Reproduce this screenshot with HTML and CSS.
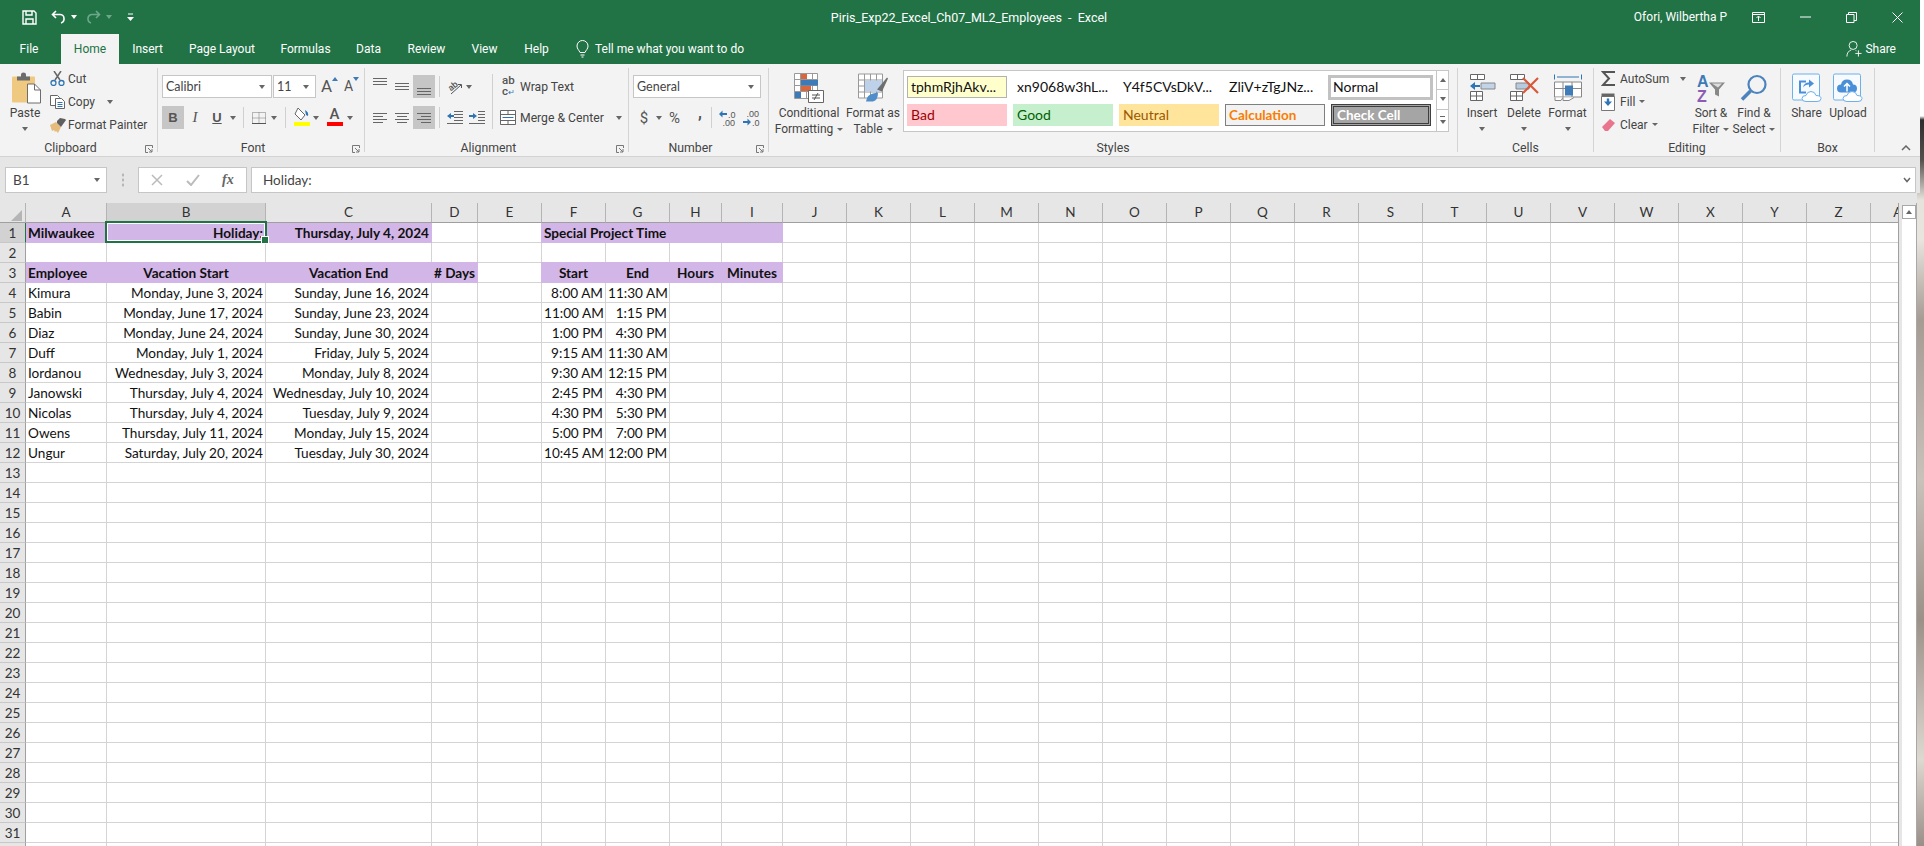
FILE: index.html
```html
<!DOCTYPE html>
<html lang="en">
<head>
<meta charset="utf-8">
<title>Piris_Exp22_Excel_Ch07_ML2_Employees - Excel</title>
<link rel="stylesheet" href="styles.css">
</head>
<body>
<div class="top">
  <header class="titlebar">
    <div class="qat">
      <svg class="q-save" width="15" height="15" viewBox="0 0 15 15" fill="none" stroke="#fff" stroke-width="1.4"><path d="M1 1h11l2 2v11H1z"/><path d="M4 1v4h6V1M4 14V9h7v5"/></svg>
      <svg class="q-undo" width="15" height="14" viewBox="0 0 15 14" fill="none" stroke="#fff" stroke-width="1.6"><path d="M5 1 1.5 4.5 5 8M2 4.5h7a4 4 0 0 1 4 4v1a4 4 0 0 1-3 3.5"/></svg>
      <i class="caret white q-c1"></i>
      <svg class="q-redo" width="15" height="14" viewBox="0 0 15 14" fill="none" stroke="#6ea88a" stroke-width="1.6"><path d="M10 1l3.5 3.5L10 8M13 4.5H6a4 4 0 0 0-4 4v1a4 4 0 0 0 3 3.5"/></svg>
      <i class="caret dim q-c2"></i>
      <svg class="q-more" width="7" height="8" viewBox="0 0 7 8"><path d="M1 1h5" stroke="#fff"/><path d="M0 4h7L3.500 8z" fill="#fff"/></svg>
    </div>
    <div class="doc-title">Piris_Exp22_Excel_Ch07_ML2_Employees  -  Excel</div>
    <div class="win">
      <span class="user">Ofori, Wilbertha P</span>
      <span class="win-btn"><svg width="14" height="11" viewBox="0 0 14 11" fill="none" stroke="#fff"><path d="M.5.500h12v10H.5zM.5 2.500h12M6.500 9V4.500M4.500 6l2-2 2 2"/></svg></span>
      <span class="win-btn"><svg width="11" height="2" viewBox="0 0 11 2"><path d="M0 1h11" stroke="#fff"/></svg></span>
      <span class="win-btn"><svg width="11" height="11" viewBox="0 0 11 11" fill="none" stroke="#fff"><path d="M.5 2.500h7.500v8H.5zM2.500 2.500v-2h8v8H8"/></svg></span>
      <span class="win-btn"><svg width="11" height="11" viewBox="0 0 11 11"><path d="M.5.500l10 10M10.500.500l-10 10" stroke="#fff"/></svg></span>
    </div>
  </header>
  <nav class="tabs">
    <span class="tab tab-file">File</span>
    <span class="tab tab-on">Home</span>
    <span class="tab">Insert</span>
    <span class="tab">Page Layout</span>
    <span class="tab">Formulas</span>
    <span class="tab">Data</span>
    <span class="tab">Review</span>
    <span class="tab">View</span>
    <span class="tab">Help</span>
    <span class="tell">
      <svg width="13" height="18" viewBox="0 0 13 18" fill="none" stroke="#fff"><path d="M4 12.500C3 10 1 9 1 6a5.500 5.500 0 0 1 11 0c0 3-2 4-3 6.500zM4.500 15h4M5.500 17h2"/></svg>
      <span>Tell me what you want to do</span>
    </span>
    <span class="share-top">
      <svg width="16" height="18" viewBox="0 0 18 19" fill="none" stroke="#fff"><circle cx="8" cy="5.500" r="4.500"/><path d="M1 18c0-4 2-6.500 5-7.500M11 11l1 1M14 11v7M10.500 14.500h7"/></svg>
      <span>Share</span>
    </span>
  </nav>

  <section class="ribbon">
    <div class="group g-clip">
      <div class="body">
        <div class="big b-paste">
          <svg class="paste-ic" width="30" height="31" viewBox="0 0 30 31"><rect y="4" width="23" height="26" rx="1" fill="#f0c981"/><path d="M5 8V4h4V2q0-2 2.500-2T14 2v2h4v4z" fill="#6d6d6d"/><path d="M15.500 11.500h7l6 6v13h-13z" fill="#fff" stroke="#6d6d6d"/><path d="M22.500 11.500v6h6" fill="none" stroke="#6d6d6d"/></svg>
          <span class="lbl">Paste</span>
          <i class="caret cap"></i>
        </div>
        <div class="smalls">
          <div class="small"><span class="ic"><svg width="15" height="15" viewBox="0 0 15 15" fill="none"><path d="M4 0l6 9M11 0 5 9" stroke="#666" stroke-width="1.500"/><circle cx="3.500" cy="12" r="2.500" stroke="#2f75b5" stroke-width="1.300"/><circle cx="11.500" cy="12" r="2.500" stroke="#2f75b5" stroke-width="1.300"/></svg></span>Cut</div>
          <div class="small"><span class="ic"><svg width="16" height="14" viewBox="0 0 16 14" fill="#fff" stroke="#666"><path d="M.5.500h7l2 2v8h-9z"/><path d="M5.500 3.500h6l3 3v7h-9z"/><path d="M7.500 7.500h5M7.500 9.500h5M7.500 11.500h5" stroke="#2f75b5"/></svg></span>Copy<i class="caret c-copy"></i></div>
          <div class="small"><span class="ic"><svg width="16" height="16" viewBox="0 0 16 16"><path d="M0 8l6-3 5 5-3 6-2-2-1 1-1-2-2 1z" fill="#e5bc7c"/><path d="M7 4l3-3 5 1 1 1-5 7-4-4z" fill="#5f5f5f"/></svg></span>Format Painter</div>
        </div>
      </div>
      <div class="label has-launcher">Clipboard<svg class="launch" width="8" height="8" viewBox="0 0 8 8" fill="none" stroke="#777"><path d="M7.500 3V.500H.500v7H3M3 3l4 4M4 7h3V4"/></svg></div>
    </div>

    <div class="group g-font">
      <div class="body stack">
        <div class="row1">
          <div class="combo c-font"><span>Calibri</span><i class="caret"></i></div>
          <div class="combo c-size"><span>11</span><i class="caret"></i></div>
          <span class="grow">A<i class="tri up"></i></span>
          <span class="grow shrink">A<i class="tri down"></i></span>
        </div>
        <div class="row2">
          <span class="btn on bold">B</span>
          <span class="btn ital">I</span>
          <span class="btn under">U</span>
          <i class="caret c-u"></i>
          <i class="vsep s-u"></i>
          <svg class="i-border" width="14" height="12" viewBox="0 0 14 12" fill="none" stroke="#777" stroke-dasharray="1 1"><path d="M.500.500h13v11H.500zM.500 6h13M7 .500v11"/><path d="M0 11.500h14" stroke="#555" stroke-dasharray="none"/></svg>
          <i class="caret c-b"></i>
          <i class="vsep s-b"></i>
          <span class="colored">
            <svg width="17" height="14" viewBox="0 0 17 14"><path d="M5 1l7 7-4 5-6-6z" fill="#fff" stroke="#666"/><path d="M12 3q4 2 3 6l-2-1z" fill="#2f75b5"/></svg>
            <i class="bar yellow"></i>
          </span>
          <i class="caret c-f"></i>
          <span class="colored fcolor"><span class="fa">A</span><i class="bar red"></i></span>
          <i class="caret c-a"></i>
        </div>
      </div>
      <div class="label has-launcher">Font<svg class="launch" width="8" height="8" viewBox="0 0 8 8" fill="none" stroke="#777"><path d="M7.500 3V.500H.500v7H3M3 3l4 4M4 7h3V4"/></svg></div>
    </div>

    <div class="group g-align">
      <div class="body">
        <div class="stack align-left">
          <div class="row1 al">
            <span class="btn"><svg width="14" height="8" viewBox="0 0 14 8" class="shift-up"><path d="M0 .500h14M0 3.500h14M0 6.500h14" stroke="#666"/></svg></span>
            <span class="btn"><svg width="14" height="8" viewBox="0 0 14 8"><path d="M0 .500h14M0 3.500h14M0 6.500h14" stroke="#666"/></svg></span>
            <span class="btn on"><svg width="14" height="8" viewBox="0 0 14 8" class="shift-down"><path d="M0 .500h14M0 3.500h14M0 6.500h14" stroke="#666"/></svg></span>
            <i class="vsep s-al"></i>
            <span class="btn"><svg width="18" height="16" viewBox="0 0 18 16" fill="none" stroke="#555"><text x="2" y="10" class="orient" transform="rotate(-40 7 7)">ab</text><path d="M5 15 15 6M12 5.500h3.500V9"/></svg></span>
            <i class="caret c-o"></i>
          </div>
          <div class="row2 al">
            <span class="btn"><svg width="14" height="10" viewBox="0 0 14 10"><path d="M0 .500h14M0 3.500h10M0 6.500h14M0 9.500h10" stroke="#666"/></svg></span>
            <span class="btn"><svg width="14" height="10" viewBox="0 0 14 10"><path d="M0 .500h14M2 3.500h10M0 6.500h14M2 9.500h10" stroke="#666"/></svg></span>
            <span class="btn on"><svg width="14" height="10" viewBox="0 0 14 10"><path d="M0 .500h14M4 3.500h10M0 6.500h14M4 9.500h10" stroke="#666"/></svg></span>
            <i class="vsep s-al"></i>
            <span class="btn"><svg width="16" height="13" viewBox="0 0 16 13"><path d="M7 .500h9M7 3.500h9M7 6.500h9M7 9.500h9M0 12.500h16" stroke="#666"/><path d="M0 5l4-3v2h3v2H4v2z" fill="#2f75b5"/></svg></span>
            <span class="btn"><svg width="16" height="13" viewBox="0 0 16 13"><path d="M9 .500h7M9 3.500h7M9 6.500h7M9 9.500h7M0 12.500h16" stroke="#666"/><path d="M8 5 4 2v2H0v2h4v2z" fill="#2f75b5"/></svg></span>
          </div>
        </div>
        <i class="vsep tall"></i>
        <div class="stack align-right">
          <div class="row1 wrap"><span class="wrap-ic"><span>ab</span><span>c<b>↵</b></span></span><span>Wrap Text</span></div>
          <div class="row2 merge"><svg width="16" height="15" viewBox="0 0 16 15" fill="#fff" stroke="#666"><path d="M.500.500h15v14H.500z"/><path d="M.500 4.500h15M.500 10.500h15M8 .500v4M8 10.500v4"/><path d="M2.500 7.500h11" stroke="#2f75b5"/></svg><span>Merge &amp; Center</span><i class="caret c-m"></i></div>
        </div>
      </div>
      <div class="label has-launcher">Alignment<svg class="launch" width="8" height="8" viewBox="0 0 8 8" fill="none" stroke="#777"><path d="M7.500 3V.500H.500v7H3M3 3l4 4M4 7h3V4"/></svg></div>
    </div>

    <div class="group g-num">
      <div class="body stack">
        <div class="row1"><div class="combo c-num"><span>General</span><i class="caret"></i></div></div>
        <div class="row2 nums">
          <span class="dollar">$</span><i class="caret c-d"></i>
          <span class="pct">%</span>
          <span class="comma">,</span>
          <i class="vsep s-n"></i>
          <svg width="17" height="16" viewBox="0 0 17 16"><path d="M0 4l3.500-3.500v2.500H8v2H3.500v2.500z" fill="#2f75b5"/><text x="9" y="8" class="tiny">.0</text><text x="3.500" y="15.500" class="tiny">.00</text></svg>
          <svg class="dec" width="17" height="16" viewBox="0 0 17 16"><text x="3.500" y="7" class="tiny">.00</text><path d="M8 12l-3.500-3.500V11H0v2h4.500v2.500z" fill="#2f75b5"/><text x="9" y="15.500" class="tiny">.0</text></svg>
        </div>
      </div>
      <div class="label has-launcher">Number<svg class="launch" width="8" height="8" viewBox="0 0 8 8" fill="none" stroke="#777"><path d="M7.500 3V.500H.500v7H3M3 3l4 4M4 7h3V4"/></svg></div>
    </div>

    <div class="group g-styles">
      <div class="body">
        <div class="big b-cf">
          <svg width="30" height="30" viewBox="0 0 30 30"><path d="M.500.500h23v25H.500zM.500 6.500h23M.500 12.500h23M.500 18.500h23M6.500.500v25M12.500.500v25M18.500.500v25" fill="#fff" stroke="#999"/><path d="M7 1h6v5H7zM7 13h10v5H7z" fill="#d9663c"/><path d="M7 7h17v5.500H7zM1 19h6v6H1z" fill="#3c7ab8"/><path d="M14.500 17.500h15v12h-15z" fill="#fff" stroke="#666"/><path d="M18 22h8M18 25h8M24 20l-4 7" stroke="#555" fill="none"/></svg>
          <span class="lbl">Conditional</span>
          <span class="lbl">Formatting<i class="caret in"></i></span>
        </div>
        <div class="big b-ft">
          <svg width="31" height="29" viewBox="0 0 31 29"><path d="M.500.500h24v24H.500zM.500 6.500h24M.500 12.500h24M.500 18.500h24M6.500.500v24M12.500.500v24M18.500.500v24" fill="#fff" stroke="#999"/><path d="M7 7h17v11H7z" fill="#bdd2ea"/><path d="M19 16 29 4l1 1-6 13z" fill="#6e6e6e"/><path d="M8 28q1-7 7-8l5-1q0 8-5 9z" fill="#4f8ecb"/></svg>
          <span class="lbl">Format as</span>
          <span class="lbl">Table<i class="caret in"></i></span>
        </div>
        <div class="gallery">
          <div class="st-grid">
            <span class="st st-y">tphmRjhAkv...</span>
            <span class="st">xn9068w3hL...</span>
            <span class="st">Y4f5CVsDkV...</span>
            <span class="st">ZliV+zTgJNz...</span>
            <span class="st st-normal">Normal</span>
            <span class="st st-bad">Bad</span>
            <span class="st st-good">Good</span>
            <span class="st st-neu">Neutral</span>
            <span class="st st-calc">Calculation</span>
            <span class="st st-check">Check Cell</span>
          </div>
          <div class="st-scroll">
            <span><i class="tri up gray"></i></span>
            <span><i class="tri down gray"></i></span>
            <span class="more"><i class="tri down gray"></i></span>
          </div>
        </div>
      </div>
      <div class="label">Styles</div>
    </div>

    <div class="group g-cells">
      <div class="body">
        <div class="big b-c1">
          <svg width="27" height="28" viewBox="0 0 27 28"><path d="M1.500.500h14v5h-14zM8.500.500v5M1.500 17.500h12v9h-12zM1.500 22h12M7.500 17.500v9" fill="#fff" stroke="#666"/><path d="M12 9h14v6H12z" fill="#c2d4e8" stroke="#888"/><path d="M1 12l5-4v3h5v2H6v3z" fill="#2f75b5"/></svg>
          <span class="lbl">Insert</span><i class="caret cap"></i>
        </div>
        <div class="big b-c2">
          <svg width="31" height="28" viewBox="0 0 31 28"><path d="M1.500.500h14v5h-14zM8.500.500v5M1.500 17.500h12v9h-12zM1.500 22h12M7.500 17.500v9" fill="#fff" stroke="#666"/><path d="M7 9h13v6H7z" fill="#b6cbe2" stroke="#888"/><path d="M14 4l15 15M29 4 14 19" stroke="#d9583a" stroke-width="2.200"/></svg>
          <span class="lbl">Delete</span><i class="caret cap"></i>
        </div>
        <div class="big b-c3">
          <svg width="28" height="29" viewBox="0 0 28 29"><path d="M.500 1v5M27.500 1v5M3 3.500h22" stroke="#2f75b5" fill="none"/><path d="M.500 8.500h27v15h-27zM.500 15h27M9 8.500v15M18 8.500v15" fill="#fff" stroke="#888"/><path d="M11 12h8v10h-8z" fill="#3f7cb8"/><path d="M1 24v3h6l2-3M9 24v3h6l5-3" fill="#fff" stroke="#888"/></svg>
          <span class="lbl">Format</span><i class="caret cap"></i>
        </div>
      </div>
      <div class="label">Cells</div>
    </div>

    <div class="group g-edit">
      <div class="body">
        <div class="smalls s-edit">
          <div class="small"><span class="ic"><svg width="15" height="15" viewBox="0 0 15 15"><path d="M14 1H2l6 6.500L2 14h12" fill="none" stroke="#555" stroke-width="2"/></svg></span>AutoSum<i class="caret c-sum"></i></div>
          <div class="small"><span class="ic"><svg width="14" height="18" viewBox="0 0 14 18"><path d="M.500 3.500h13v14H.500z" fill="#fff" stroke="#777"/><path d="M.500.500h13v3H.500z" fill="#666"/><path d="M7 13 3 8.500h2.800V5.500h2.400v3H11z" fill="#2f75b5"/></svg></span>Fill<i class="caret in"></i></div>
          <div class="small"><span class="ic"><svg width="15" height="14" viewBox="0 0 15 14"><path d="M1 9l8-8 5 4-7 8H4z" fill="#e8758d"/></svg></span>Clear<i class="caret in"></i></div>
        </div>
        <div class="big b-sort">
          <svg width="30" height="29" viewBox="0 0 30 29"><text x="1" y="13" class="az a">A</text><text x="1" y="28" class="az z">Z</text><path d="M13 9h16l-6 7v7l-4-2v-5z" fill="#888"/><path d="M16 10h10l-4 4z" fill="#ddd"/></svg>
          <span class="lbl">Sort &amp;</span>
          <span class="lbl">Filter<i class="caret in"></i></span>
        </div>
        <div class="big b-find">
          <svg width="28" height="29" viewBox="0 0 28 29" fill="none"><circle cx="17" cy="11" r="8.500" stroke="#4a83bd" stroke-width="2.200"/><path d="M10.500 17.500 2 26" stroke="#4a83bd" stroke-width="3.500"/></svg>
          <span class="lbl">Find &amp;</span>
          <span class="lbl">Select<i class="caret in"></i></span>
        </div>
      </div>
      <div class="label">Editing</div>
    </div>

    <div class="group g-box">
      <div class="body">
        <div class="big b-b1">
          <svg width="30" height="29" viewBox="0 0 30 29"><rect x=".5" y=".5" width="27" height="26" rx="1.500" fill="#f8fbfe" stroke="#6db0ec"/><path d="M14 8H8v11h6" fill="none" stroke="#4a90d9" stroke-width="2"/><path d="M11 14q1-5 6-5V6l5 4-5 4v-3q-4 0-6 3z" fill="#4a90d9"/><path d="M14 28q-4 0-4-3t4-3q1-4 5-4t5 4q5 0 5 3t-4 3z" fill="#fff" stroke="#6db0ec"/></svg>
          <span class="lbl">Share</span>
        </div>
        <div class="big b-b2">
          <svg width="30" height="29" viewBox="0 0 30 29"><rect x=".5" y=".5" width="27" height="26" rx="1.500" fill="#f8fbfe" stroke="#6db0ec"/><path d="M8 19q-4 0-4-4t4-4q1-5 6-5t6 5q4 0 4 4t-4 4z" fill="#4a90d9"/><path d="M14 18v-7M11 13l3-3 3 3" fill="none" stroke="#fff" stroke-width="1.500"/><path d="M14 28q-4 0-4-3t4-3q1-4 5-4t5 4q5 0 5 3t-4 3z" fill="#fff" stroke="#6db0ec"/></svg>
          <span class="lbl">Upload</span>
        </div>
      </div>
      <div class="label">Box</div>
    </div>
    <div class="collapse"><svg width="10" height="6" viewBox="0 0 10 6" fill="none" stroke="#666" stroke-width="1.500"><path d="M1 5l4-4 4 4"/></svg></div>
  </section>

  <section class="formula">
    <div class="namebox"><span>B1</span><i class="caret c-name"></i></div>
    <div class="dots"></div>
    <div class="fxbox">
      <svg width="12" height="12" viewBox="0 0 12 12"><path d="M1 1l10 10M11 1 1 11" stroke="#bbb" stroke-width="1.500"/></svg>
      <svg width="14" height="12" viewBox="0 0 14 12" fill="none"><path d="M1 7l4 4 8-10" stroke="#bbb" stroke-width="2"/></svg>
      <span class="fx">fx</span>
    </div>
    <div class="finput"><span>Holiday:</span><svg class="chev" width="8" height="6" viewBox="0 0 8 6" fill="none" stroke="#666" stroke-width="1.500"><path d="M1 1l3 3.500L7 1"/></svg></div>
  </section>
</div>

<main class="sheetarea">
  <div class="gridwrap">
    <table class="grid">
      <colgroup>
        <col class="w-h"><col class="w-a"><col class="w-b"><col class="w-c"><col class="w-d"><col class="w-s"><col class="w-s"><col class="w-s"><col class="w-hh"><col class="w-i"><col class="w-s"><col class="w-s"><col class="w-s"><col class="w-s"><col class="w-s"><col class="w-s"><col class="w-s"><col class="w-s"><col class="w-s"><col class="w-s"><col class="w-s"><col class="w-s"><col class="w-s"><col class="w-s"><col class="w-s"><col class="w-s"><col class="w-s"><col class="w-s">
      </colgroup>
      <thead>
        <tr><th class="corner"><i class="corner-tri"></i></th><th>A</th><th class="cur">B</th><th>C</th><th>D</th><th>E</th><th>F</th><th>G</th><th>H</th><th>I</th><th>J</th><th>K</th><th>L</th><th>M</th><th>N</th><th>O</th><th>P</th><th>Q</th><th>R</th><th>S</th><th>T</th><th>U</th><th>V</th><th>W</th><th>X</th><th>Y</th><th>Z</th><th>AA</th></tr>
      </thead>
      <tbody>
        <tr><th class="cur-row">1</th><td class="p">Milwaukee</td><td class="p r active">Holiday:<span class="sel"><i class="handle"></i></span></td><td class="p r">Thursday, July 4, 2024</td><td></td><td></td><td class="p pl" colspan="4">Special Project Time</td><td></td><td></td><td></td><td></td><td></td><td></td><td></td><td></td><td></td><td></td><td></td><td></td><td></td><td></td><td></td><td></td><td></td><td></td></tr>
        <tr><th>2</th><td></td><td></td><td></td><td></td><td></td><td></td><td></td><td></td><td></td><td></td><td></td><td></td><td></td><td></td><td></td><td></td><td></td><td></td><td></td><td></td><td></td><td></td><td></td><td></td><td></td><td></td><td></td></tr>
        <tr><th>3</th><td class="p pt">Employee</td><td class="p pt c">Vacation Start</td><td class="p pt c">Vacation End</td><td class="p pt c">#&nbsp;Days</td><td></td><td class="p pt pl c">Start</td><td class="p pt c">End</td><td class="p pt c">Hours</td><td class="p pt c">Minutes</td><td></td><td></td><td></td><td></td><td></td><td></td><td></td><td></td><td></td><td></td><td></td><td></td><td></td><td></td><td></td><td></td><td></td><td></td></tr>
        <tr><th>4</th><td>Kimura</td><td class="r">Monday, June 3, 2024</td><td class="r">Sunday, June 16, 2024</td><td></td><td></td><td class="r">8:00 AM</td><td class="r">11:30 AM</td><td></td><td></td><td></td><td></td><td></td><td></td><td></td><td></td><td></td><td></td><td></td><td></td><td></td><td></td><td></td><td></td><td></td><td></td><td></td><td></td></tr>
        <tr><th>5</th><td>Babin</td><td class="r">Monday, June 17, 2024</td><td class="r">Sunday, June 23, 2024</td><td></td><td></td><td class="r">11:00 AM</td><td class="r">1:15 PM</td><td></td><td></td><td></td><td></td><td></td><td></td><td></td><td></td><td></td><td></td><td></td><td></td><td></td><td></td><td></td><td></td><td></td><td></td><td></td><td></td></tr>
        <tr><th>6</th><td>Diaz</td><td class="r">Monday, June 24, 2024</td><td class="r">Sunday, June 30, 2024</td><td></td><td></td><td class="r">1:00 PM</td><td class="r">4:30 PM</td><td></td><td></td><td></td><td></td><td></td><td></td><td></td><td></td><td></td><td></td><td></td><td></td><td></td><td></td><td></td><td></td><td></td><td></td><td></td><td></td></tr>
        <tr><th>7</th><td>Duff</td><td class="r">Monday, July 1, 2024</td><td class="r">Friday, July 5, 2024</td><td></td><td></td><td class="r">9:15 AM</td><td class="r">11:30 AM</td><td></td><td></td><td></td><td></td><td></td><td></td><td></td><td></td><td></td><td></td><td></td><td></td><td></td><td></td><td></td><td></td><td></td><td></td><td></td><td></td></tr>
        <tr><th>8</th><td>Iordanou</td><td class="r">Wednesday, July 3, 2024</td><td class="r">Monday, July 8, 2024</td><td></td><td></td><td class="r">9:30 AM</td><td class="r">12:15 PM</td><td></td><td></td><td></td><td></td><td></td><td></td><td></td><td></td><td></td><td></td><td></td><td></td><td></td><td></td><td></td><td></td><td></td><td></td><td></td><td></td></tr>
        <tr><th>9</th><td>Janowski</td><td class="r">Thursday, July 4, 2024</td><td class="r">Wednesday, July 10, 2024</td><td></td><td></td><td class="r">2:45 PM</td><td class="r">4:30 PM</td><td></td><td></td><td></td><td></td><td></td><td></td><td></td><td></td><td></td><td></td><td></td><td></td><td></td><td></td><td></td><td></td><td></td><td></td><td></td><td></td></tr>
        <tr><th>10</th><td>Nicolas</td><td class="r">Thursday, July 4, 2024</td><td class="r">Tuesday, July 9, 2024</td><td></td><td></td><td class="r">4:30 PM</td><td class="r">5:30 PM</td><td></td><td></td><td></td><td></td><td></td><td></td><td></td><td></td><td></td><td></td><td></td><td></td><td></td><td></td><td></td><td></td><td></td><td></td><td></td><td></td></tr>
        <tr><th>11</th><td>Owens</td><td class="r">Thursday, July 11, 2024</td><td class="r">Monday, July 15, 2024</td><td></td><td></td><td class="r">5:00 PM</td><td class="r">7:00 PM</td><td></td><td></td><td></td><td></td><td></td><td></td><td></td><td></td><td></td><td></td><td></td><td></td><td></td><td></td><td></td><td></td><td></td><td></td><td></td><td></td></tr>
        <tr><th>12</th><td>Ungur</td><td class="r">Saturday, July 20, 2024</td><td class="r">Tuesday, July 30, 2024</td><td></td><td></td><td class="r">10:45 AM</td><td class="r">12:00 PM</td><td></td><td></td><td></td><td></td><td></td><td></td><td></td><td></td><td></td><td></td><td></td><td></td><td></td><td></td><td></td><td></td><td></td><td></td><td></td><td></td></tr>
        <tr><th>13</th><td></td><td></td><td></td><td></td><td></td><td></td><td></td><td></td><td></td><td></td><td></td><td></td><td></td><td></td><td></td><td></td><td></td><td></td><td></td><td></td><td></td><td></td><td></td><td></td><td></td><td></td><td></td></tr>
        <tr><th>14</th><td></td><td></td><td></td><td></td><td></td><td></td><td></td><td></td><td></td><td></td><td></td><td></td><td></td><td></td><td></td><td></td><td></td><td></td><td></td><td></td><td></td><td></td><td></td><td></td><td></td><td></td><td></td></tr>
        <tr><th>15</th><td></td><td></td><td></td><td></td><td></td><td></td><td></td><td></td><td></td><td></td><td></td><td></td><td></td><td></td><td></td><td></td><td></td><td></td><td></td><td></td><td></td><td></td><td></td><td></td><td></td><td></td><td></td></tr>
        <tr><th>16</th><td></td><td></td><td></td><td></td><td></td><td></td><td></td><td></td><td></td><td></td><td></td><td></td><td></td><td></td><td></td><td></td><td></td><td></td><td></td><td></td><td></td><td></td><td></td><td></td><td></td><td></td><td></td></tr>
        <tr><th>17</th><td></td><td></td><td></td><td></td><td></td><td></td><td></td><td></td><td></td><td></td><td></td><td></td><td></td><td></td><td></td><td></td><td></td><td></td><td></td><td></td><td></td><td></td><td></td><td></td><td></td><td></td><td></td></tr>
        <tr><th>18</th><td></td><td></td><td></td><td></td><td></td><td></td><td></td><td></td><td></td><td></td><td></td><td></td><td></td><td></td><td></td><td></td><td></td><td></td><td></td><td></td><td></td><td></td><td></td><td></td><td></td><td></td><td></td></tr>
        <tr><th>19</th><td></td><td></td><td></td><td></td><td></td><td></td><td></td><td></td><td></td><td></td><td></td><td></td><td></td><td></td><td></td><td></td><td></td><td></td><td></td><td></td><td></td><td></td><td></td><td></td><td></td><td></td><td></td></tr>
        <tr><th>20</th><td></td><td></td><td></td><td></td><td></td><td></td><td></td><td></td><td></td><td></td><td></td><td></td><td></td><td></td><td></td><td></td><td></td><td></td><td></td><td></td><td></td><td></td><td></td><td></td><td></td><td></td><td></td></tr>
        <tr><th>21</th><td></td><td></td><td></td><td></td><td></td><td></td><td></td><td></td><td></td><td></td><td></td><td></td><td></td><td></td><td></td><td></td><td></td><td></td><td></td><td></td><td></td><td></td><td></td><td></td><td></td><td></td><td></td></tr>
        <tr><th>22</th><td></td><td></td><td></td><td></td><td></td><td></td><td></td><td></td><td></td><td></td><td></td><td></td><td></td><td></td><td></td><td></td><td></td><td></td><td></td><td></td><td></td><td></td><td></td><td></td><td></td><td></td><td></td></tr>
        <tr><th>23</th><td></td><td></td><td></td><td></td><td></td><td></td><td></td><td></td><td></td><td></td><td></td><td></td><td></td><td></td><td></td><td></td><td></td><td></td><td></td><td></td><td></td><td></td><td></td><td></td><td></td><td></td><td></td></tr>
        <tr><th>24</th><td></td><td></td><td></td><td></td><td></td><td></td><td></td><td></td><td></td><td></td><td></td><td></td><td></td><td></td><td></td><td></td><td></td><td></td><td></td><td></td><td></td><td></td><td></td><td></td><td></td><td></td><td></td></tr>
        <tr><th>25</th><td></td><td></td><td></td><td></td><td></td><td></td><td></td><td></td><td></td><td></td><td></td><td></td><td></td><td></td><td></td><td></td><td></td><td></td><td></td><td></td><td></td><td></td><td></td><td></td><td></td><td></td><td></td></tr>
        <tr><th>26</th><td></td><td></td><td></td><td></td><td></td><td></td><td></td><td></td><td></td><td></td><td></td><td></td><td></td><td></td><td></td><td></td><td></td><td></td><td></td><td></td><td></td><td></td><td></td><td></td><td></td><td></td><td></td></tr>
        <tr><th>27</th><td></td><td></td><td></td><td></td><td></td><td></td><td></td><td></td><td></td><td></td><td></td><td></td><td></td><td></td><td></td><td></td><td></td><td></td><td></td><td></td><td></td><td></td><td></td><td></td><td></td><td></td><td></td></tr>
        <tr><th>28</th><td></td><td></td><td></td><td></td><td></td><td></td><td></td><td></td><td></td><td></td><td></td><td></td><td></td><td></td><td></td><td></td><td></td><td></td><td></td><td></td><td></td><td></td><td></td><td></td><td></td><td></td><td></td></tr>
        <tr><th>29</th><td></td><td></td><td></td><td></td><td></td><td></td><td></td><td></td><td></td><td></td><td></td><td></td><td></td><td></td><td></td><td></td><td></td><td></td><td></td><td></td><td></td><td></td><td></td><td></td><td></td><td></td><td></td></tr>
        <tr><th>30</th><td></td><td></td><td></td><td></td><td></td><td></td><td></td><td></td><td></td><td></td><td></td><td></td><td></td><td></td><td></td><td></td><td></td><td></td><td></td><td></td><td></td><td></td><td></td><td></td><td></td><td></td><td></td></tr>
        <tr><th>31</th><td></td><td></td><td></td><td></td><td></td><td></td><td></td><td></td><td></td><td></td><td></td><td></td><td></td><td></td><td></td><td></td><td></td><td></td><td></td><td></td><td></td><td></td><td></td><td></td><td></td><td></td><td></td></tr>
        <tr><th></th><td></td><td></td><td></td><td></td><td></td><td></td><td></td><td></td><td></td><td></td><td></td><td></td><td></td><td></td><td></td><td></td><td></td><td></td><td></td><td></td><td></td><td></td><td></td><td></td><td></td><td></td><td></td></tr>
      </tbody>
    </table>
  </div>
  <div class="vscroll"><div class="v-up"><i class="tri up gray"></i></div></div>
</main>
</body>
</html>
```
FILE: styles.css
```css
* { box-sizing: border-box; }
html, body { margin: 0; height: 846px; overflow: hidden; }
body {
  width: 1924px;
  font-family: Roboto, "Noto Sans", sans-serif;
  font-size: 12px;
  color: #444;
  background: linear-gradient(180deg, #fff 0, #fff 116px, #2d2d2d 120px, #55504c 160px, #e6e2dc 200px, #e8e4de 240px, #a59c94 320px, #c9c2ba 480px, #9b9189 620px, #ddd8d0 760px, #9a8f88 846px);
}
i { display: block; font-style: normal; }
svg { display: block; flex: none; }

.top { width: 1920px; background: #f3f3f3; }

/* title bar */
.titlebar { height: 34px; background: #217346; color: #fff; display: flex; align-items: center; font-size: 12.5px; }
.qat { flex: 1; display: flex; align-items: center; padding-left: 22px; }
.q-undo { margin-left: 14px; }
.q-c1 { margin-left: 5px; }
.q-redo { margin-left: 9px; }
.q-c2 { margin-left: 5px; }
.q-more { margin-left: 15px; }
.doc-title { white-space: pre; text-align: center; margin-right: 4px; }
.win { flex: 1; display: flex; align-items: center; justify-content: flex-end; }
.user { margin-right: 9px; font-size: 12px; }
.win-btn { width: 46px; height: 34px; display: flex; align-items: center; justify-content: center; }

/* tabs */
.tabs { height: 30px; background: #217346; color: #fff; display: grid; grid-template-columns: 61px 58px 57px 92px 75px 51px 65px 51px 53px 1fr auto; align-items: stretch; font-size: 12px; }
.tab { display: flex; align-items: center; justify-content: center; }
.tab-file { padding-right: 3px; }
.tab-on { background: #f3f3f3; color: #217346; }
.tell { display: flex; align-items: center; gap: 6px; padding-left: 13px; }
.share-top { display: flex; align-items: center; gap: 3px; padding-right: 24px; }

/* carets */
.caret { width: 0; height: 0; border-left: 3.5px solid transparent; border-right: 3.5px solid transparent; border-top: 4px solid #666; flex: none; }
.caret.white { border-top-color: #fff; }
.caret.dim { border-top-color: #6ea88a; }
.caret.in { display: inline-block; margin-left: 4px; vertical-align: 2px; border-left-width: 3px; border-right-width: 3px; border-top-width: 3px; }
.caret.cap { margin-top: 6px; }

/* ribbon */
.ribbon { height: 93px; padding-top: 4px; display: flex; border-bottom: 1px solid #d2d2d2; background: #f3f3f3; }
.group { height: 84px; display: flex; flex-direction: column; border-right: 1px solid #d4d4d4; flex: none; position: relative; }
.body { height: 68px; display: flex; }
.stack { flex-direction: column; display: flex; }
.label { height: 16px; line-height: 24px; text-align: center; font-size: 12.3px; white-space: nowrap; }
.has-launcher { padding-right: 16px; }
.launch { position: absolute; right: 4px; bottom: -1px; }
.g-clip { width: 158px; }
.g-font { width: 207px; }
.g-align { width: 264px; }
.g-num { width: 140px; }
.g-styles { width: 689px; }
.g-cells { width: 136px; }
.g-edit { width: 187px; }
.g-box { width: 94px; }
.collapse { flex: 1; position: relative; }
.collapse svg { position: absolute; left: 26px; top: 77px; }

.big { display: flex; flex-direction: column; align-items: center; padding-top: 4px; flex: none; }
.big > svg { height: 32px; }
.lbl { display: block; height: 16px; line-height: 16px; white-space: nowrap; font-size: 12px; }
.big > svg + .lbl { margin-top: 1px; }
.b-paste { width: 44px; margin-left: 3px; }
.paste-ic { margin-left: 4px; }
.smalls { margin-left: 3px; margin-top: -1px; }
.small { height: 23px; display: flex; align-items: center; white-space: nowrap; font-size: 12px; }
.ic { width: 18px; display: flex; align-items: center; }
.c-copy { margin-left: 12px; }

/* font */
.row1 { display: flex; align-items: center; height: 23px; margin-top: 7px; }
.row2 { display: flex; align-items: center; height: 23px; margin-top: 8px; }
.g-font .body, .g-num .body { padding-left: 4px; }
.combo { height: 23px; background: #fff; border: 1px solid #c6c6c6; display: flex; align-items: center; justify-content: space-between; padding: 0 6px 0 3px; font-family: "Lato", sans-serif; font-size: 12.5px; color: #444; }
.c-font { width: 110px; }
.c-size { width: 43px; margin-left: 1px; }
.c-num { width: 128px; }
.grow { position: relative; width: 17px; margin-left: 5px; font-size: 17px; line-height: 23px; color: #555; }
.grow.shrink { font-size: 14px; margin-left: 6px; width: 15px; }
.grow .tri { position: absolute; right: 0; top: 2px; }
.tri { width: 0; height: 0; border-left: 3px solid transparent; border-right: 3px solid transparent; }
.tri.up { border-bottom: 4px solid #3d7ab8; }
.tri.down { border-top: 4px solid #3d7ab8; }
.tri.gray.up { border-bottom-color: #666; }
.tri.gray.down { border-top-color: #666; }
.btn { width: 22px; height: 23px; display: flex; align-items: center; justify-content: center; flex: none; font-size: 13px; color: #555; }
.btn.on { background: #c6c6c6; }
.bold { font-weight: 700; font-family: "Liberation Sans", sans-serif; font-size: 13px; }
.ital { font-style: italic; font-family: "Liberation Serif", serif; font-size: 15px; }
.under { text-decoration: underline; font-weight: 700; font-family: "Liberation Sans", sans-serif; }
.c-u { margin-left: 2px; }
.vsep { width: 1px; height: 21px; background: #d0d0d0; flex: none; }
.s-u { margin-left: 7px; }
.i-border { margin-left: 8px; }
.c-b { margin-left: 5px; }
.s-b { margin-left: 8px; }
.colored { display: flex; flex-direction: column; align-items: center; width: 17px; margin-left: 7px; margin-top: -3px; }
.bar { width: 16px; height: 4px; margin-top: 1px; }
.yellow { background: #ffff00; }
.red { background: #ff0000; width: 16px; }
.fcolor { margin-left: 7px; }
.fa { font-size: 15px; line-height: 14px; font-weight: 500; color: #555; }
.c-f { margin-left: 3px; }
.c-a { margin-left: 4px; }

/* alignment */
.g-align .body { padding-left: 4px; }
.s-al { margin: 0 4px; }
.align-left { width: 119px; }
.al { margin-left: 0; }
.c-o { margin-left: 0; }
.shift-up { transform: translateY(-5px); }
.shift-down { transform: translateY(5px); }
.orient { font-size: 9px; fill: #555; stroke: none; font-family: Roboto, sans-serif; font-weight: 500; }
.vsep.tall { height: 55px; margin: 6px 0 0 4px; }
.align-right { margin-left: 7px; font-size: 12.2px; white-space: nowrap; }
.wrap { gap: 4px; padding-left: 2px; }
.wrap-ic { font-size: 11.5px; line-height: 11px; color: #555; width: 14px; font-weight: 500; display: flex; flex-direction: column; }
.wrap-ic b { color: #2f75b5; font-size: 8px; font-weight: 400; }
.merge { gap: 4px; }
.c-m { margin-left: 8px; }

/* number */
.nums { padding-left: 4px; }
.dollar { font-size: 15px; width: 14px; text-align: center; margin-left: 0; color: #555; }
.c-d { margin-left: 5px; }
.pct { font-size: 15px; margin-left: 7px; color: #555; width: 18px; }
.comma { font-size: 16px; font-weight: 700; margin-left: 11px; color: #555; line-height: 10px; width: 8px; transform: translateY(-5px); }
.s-n { margin-left: 5px; margin-right: 7px; }
.dec { margin-left: 7px; }
.tiny { font-size: 9px; fill: #555; font-family: "Liberation Sans", sans-serif; }

/* styles */
.b-cf { width: 60px; margin-left: 10px; }
.b-ft { width: 62px; margin-left: 3px; }
.gallery { width: 546px; height: 62px; margin: 2px 0 0 -1px; background: #fff; border: 1px solid #c6c6c6; display: flex; flex: none; }
.st-grid { margin-left: 3px; padding-top: 5px; width: 529px; display: grid; grid-template-columns: 100px 100px 100px 100px 105px; column-gap: 6px; row-gap: 6px; grid-template-rows: 22px 22px; }
.st { font-family: "Lato", sans-serif; font-size: 14px; color: #111; line-height: 22px; padding-left: 4px; white-space: nowrap; overflow: hidden; }
.st-y { background: #ffffcc; border: 1px solid #b2b2b2; line-height: 20px; padding-left: 3px; }
.st-normal { margin-left: -3px; height: 25px; margin-top: -1px; width: 105px; border: 3px solid #c2c2c2; line-height: 17px; padding-left: 2px; background: #fff; }
.st-bad { background: #ffc7ce; color: #9c0006; }
.st-good { background: #c6efce; color: #006100; }
.st-neu { background: #ffe59c; color: #9c5700; }
.st-calc { background: #f2f2f2; border: 1px solid #7f7f7f; color: #fa7d00; font-weight: 700; font-size: 13.5px; line-height: 20px; padding-left: 3px; }
.st-check { margin-left: 0; width: 100px; background: #a5a5a5; color: #fff; font-weight: 700; font-size: 13.5px; border: 3px double #3f3f3f; line-height: 16px; padding-left: 3px; }
.st-scroll { width: 14px; border-left: 1px solid #c6c6c6; display: flex; flex-direction: column; margin-left: auto; }
.st-scroll span { flex: 1; display: flex; align-items: center; justify-content: center; border-bottom: 1px solid #c6c6c6; }
.st-scroll span:last-child { border-bottom: 0; }
.st-scroll .more { border-bottom: 0; padding-top: 3px; position: relative; }
.st-scroll .more::before { content: ""; position: absolute; left: 3px; right: 3px; top: 6px; height: 1px; background: #666; }

/* cells */
.g-cells .body { padding-left: 3px; }
.b-c1, .b-c2 { width: 42px; }
.b-c3 { width: 43px; margin-left: 1px; }

/* editing */
.s-edit { margin-left: 7px; width: 88px; }
.s-edit .ic { width: 19px; }
.c-sum { margin-left: 11px; }
.b-sort, .b-find { width: 44px; }
.b-find { margin-left: -1px; }
.az { font-size: 16px; font-weight: 700; font-family: "Liberation Sans", sans-serif; }
.a { fill: #3d7ab8; }
.z { fill: #8b5bb5; }

/* box */
.g-box .body { padding-left: 5px; }
.b-b1 { width: 41px; }
.b-b2 { width: 42px; }

/* formula bar */
.formula { height: 36px; background: #e6e6e6; padding: 10px 5px 0 5px; display: flex; align-items: stretch; font-family: "Lato", sans-serif; font-size: 13.5px; }
.namebox { width: 102px; background: #fff; border: 1px solid #c6c6c6; display: flex; align-items: center; justify-content: space-between; padding: 0 6px 0 7px; color: #444; }
.dots { width: 31px; background-image: radial-gradient(circle, #aaa 1px, transparent 1.300px); background-size: 2px 5px; background-position: center; background-repeat: repeat-y; margin: 6px 0; }
.fxbox { width: 109px; background: #fff; border: 1px solid #c6c6c6; display: flex; align-items: center; padding-left: 12px; gap: 23px; }
.fx { font-family: "Liberation Serif", serif; font-style: italic; font-size: 14px; font-weight: 700; color: #666; margin-left: -1px; }
.finput { flex: 1; margin-left: 4px; margin-right: -1px; background: #fff; border: 1px solid #c6c6c6; display: flex; align-items: center; justify-content: space-between; padding: 0 4px 0 11px; color: #444; }

/* sheet */
.sheetarea { width: 1917px; height: 653px; display: flex; background: #e6e6e6; padding-top: 10px; }
.gridwrap { width: 1899px; height: 643px; overflow: hidden; border-right: 1px solid #a0a0a0; flex: none; }
.grid { width: 1935px; table-layout: fixed; border-collapse: separate; border-spacing: 0; font-family: "Lato", sans-serif; font-size: 13.6px; color: #111; background: #fff; }
.w-h { width: 26px; } .w-a { width: 81px; } .w-b { width: 159px; } .w-c { width: 166px; } .w-d { width: 46px; } .w-s { width: 64px; } .w-hh { width: 52px; } .w-i { width: 61px; }
.grid th { height: 20px; padding: 0; background: #e6e6e6; font-weight: 400; font-size: 13.5px; color: #333; text-align: center; white-space: nowrap; border-right: 1px solid #b4b4b4; border-bottom: 1px solid #9f9f9f; }
.grid tbody th { border-right: 1px solid #9f9f9f; border-bottom: 1px solid #c8c8c8; }
.grid thead th { line-height: 19px; }
.grid th.cur { background: #d2d2d2; }
.grid th.cur-row { background: #d2d2d2; border-right: 1px solid #217346; }
.corner { position: relative; }
.corner-tri { width: 0; height: 0; border-left: 11px solid transparent; border-bottom: 11px solid #b5b5b5; margin: 5px 0 0 11px; }
.grid td { height: 20px; padding: 2px 2px 0; border-right: 1px solid #d4d4d4; border-bottom: 1px solid #d4d4d4; line-height: 17px; white-space: nowrap; vertical-align: bottom; overflow: visible; }
.grid td.p { background: #d3b6e8; border-color: #d3b6e8; font-weight: 700; }
.grid td.pt { box-shadow: 0 -1px 0 #d3b6e8; }
.grid td.pl { box-shadow: -1px 0 0 #d3b6e8; }
.grid td.pt.pl { box-shadow: -1px 0 0 #d3b6e8, 0 -1px 0 #d3b6e8, -1px -1px 0 #d3b6e8; }
.grid .r { text-align: right; }
.grid .c { text-align: center; }
.active { position: relative; }
.sel { position: absolute; left: -2px; top: -2px; right: -2px; bottom: -1px; border: 2px solid #217346; box-shadow: inset 0 0 0 1px #fff; }
.handle { position: absolute; right: -3px; bottom: -2px; width: 6px; height: 6px; background: #217346; outline: 1px solid #fff; }

.vscroll { flex: 1; padding: 2px 0 0 3px; background: #e6e6e6; background-image: linear-gradient(#e6e6e6 16px, #fff 16px); background-clip: content-box; border-right: 1px solid #a8a8a8; }
.v-up { height: 14px; background: #fff; border: 1px solid #a8a8a8; display: flex; align-items: center; justify-content: center; }
```
